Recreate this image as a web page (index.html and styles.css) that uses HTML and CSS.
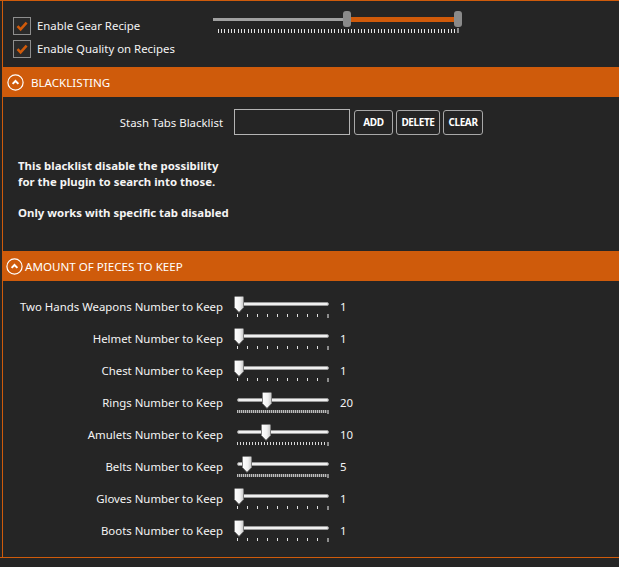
FILE: index.html
```html
<!DOCTYPE html>
<html>
<head>
<meta charset="utf-8">
<link rel="stylesheet" href="styles.css">
</head>
<body>
<svg class="defs" width="0" height="0" aria-hidden="true">
  <defs>
    <linearGradient id="tg" x1="0" y1="0" x2="1" y2="0">
      <stop offset="0" stop-color="#ffffff"/>
      <stop offset="0.6" stop-color="#f2f2f2"/>
      <stop offset="1" stop-color="#c8c8c8"/>
    </linearGradient>
  </defs>
</svg>
<div class="frame">
  <div class="panel">
    <section class="top">
      <div class="checks">
        <div class="check">
          <span class="box"><svg width="16" height="16" viewBox="0 0 16 16"><path d="M3.5 8.2 L6.6 11.3 L12.6 4.6" fill="none" stroke="#d05a0a" stroke-width="2.6"/></svg></span>
          <span>Enable Gear Recipe</span>
        </div>
        <div class="check">
          <span class="box"><svg width="16" height="16" viewBox="0 0 16 16"><path d="M3.5 8.2 L6.6 11.3 L12.6 4.6" fill="none" stroke="#d05a0a" stroke-width="2.6"/></svg></span>
          <span>Enable Quality on Recipes</span>
        </div>
      </div>
      <div class="range">
        <div class="range-track"></div>
        <div class="range-sel"></div>
        <div class="range-thumb range-thumb-a"></div>
        <div class="range-thumb range-thumb-b"></div>
        <div class="range-ticks"></div>
        <div class="range-end"></div>
      </div>
    </section>

    <div class="hdr">
      <svg class="chev" width="17" height="17" viewBox="0 0 17 17"><circle cx="8.5" cy="8.5" r="7.6" fill="none" stroke="#fff" stroke-width="1.2"/><path d="M5.6 9.9 L8.5 7 L11.4 9.9" fill="none" stroke="#fff" stroke-width="2"/></svg>
      <span>Blacklisting</span>
    </div>

    <section class="blacklist">
      <div class="stash">
        <span class="stash-label">Stash Tabs Blacklist</span>
        <input class="stash-input" type="text">
        <button class="btn btn-add">ADD</button>
        <button class="btn btn-del">DELETE</button>
        <button class="btn btn-clr">CLEAR</button>
      </div>
      <p class="note">This blacklist disable the possibility<br>for the plugin to search into those.</p>
      <p class="note note-2">Only works with specific tab disabled</p>
    </section>

    <div class="hdr hdr-2">
      <svg class="chev" width="17" height="17" viewBox="0 0 17 17"><circle cx="8.5" cy="8.5" r="7.6" fill="none" stroke="#fff" stroke-width="1.2"/><path d="M5.6 9.9 L8.5 7 L11.4 9.9" fill="none" stroke="#fff" stroke-width="2"/></svg>
      <span>Amount of pieces to keep</span>
    </div>

    <section class="keep">
      <div class="row">
        <span class="lbl">Two Hands Weapons Number to Keep</span>
        <div class="slider"><div class="track"></div><div class="ticks t10"></div><div class="tick-end"></div>
          <svg class="thumb" style="left:0px" width="10" height="17" viewBox="0 0 10 17"><path d="M1.5 0.5 H8.5 Q9.5 0.5 9.5 1.5 V11.5 L5 16.3 L0.5 11.5 V1.5 Q0.5 0.5 1.5 0.5 Z" fill="url(#tg)" stroke="#7c7c7c"/></svg></div>
        <span class="val">1</span>
      </div>
      <div class="row">
        <span class="lbl">Helmet Number to Keep</span>
        <div class="slider"><div class="track"></div><div class="ticks t10"></div><div class="tick-end"></div>
          <svg class="thumb" style="left:0px" width="10" height="17" viewBox="0 0 10 17"><path d="M1.5 0.5 H8.5 Q9.5 0.5 9.5 1.5 V11.5 L5 16.3 L0.5 11.5 V1.5 Q0.5 0.5 1.5 0.5 Z" fill="url(#tg)" stroke="#7c7c7c"/></svg></div>
        <span class="val">1</span>
      </div>
      <div class="row">
        <span class="lbl">Chest Number to Keep</span>
        <div class="slider"><div class="track"></div><div class="ticks t10"></div><div class="tick-end"></div>
          <svg class="thumb" style="left:0px" width="10" height="17" viewBox="0 0 10 17"><path d="M1.5 0.5 H8.5 Q9.5 0.5 9.5 1.5 V11.5 L5 16.3 L0.5 11.5 V1.5 Q0.5 0.5 1.5 0.5 Z" fill="url(#tg)" stroke="#7c7c7c"/></svg></div>
        <span class="val">1</span>
      </div>
      <div class="row">
        <span class="lbl">Rings Number to Keep</span>
        <div class="slider"><div class="track"></div><div class="ticks t2"></div><div class="tick-end"></div>
          <svg class="thumb" style="left:28px" width="10" height="17" viewBox="0 0 10 17"><path d="M1.5 0.5 H8.5 Q9.5 0.5 9.5 1.5 V11.5 L5 16.3 L0.5 11.5 V1.5 Q0.5 0.5 1.5 0.5 Z" fill="url(#tg)" stroke="#7c7c7c"/></svg></div>
        <span class="val">20</span>
      </div>
      <div class="row">
        <span class="lbl">Amulets Number to Keep</span>
        <div class="slider"><div class="track"></div><div class="ticks t3"></div><div class="tick-end"></div>
          <svg class="thumb" style="left:27px" width="10" height="17" viewBox="0 0 10 17"><path d="M1.5 0.5 H8.5 Q9.5 0.5 9.5 1.5 V11.5 L5 16.3 L0.5 11.5 V1.5 Q0.5 0.5 1.5 0.5 Z" fill="url(#tg)" stroke="#7c7c7c"/></svg></div>
        <span class="val">10</span>
      </div>
      <div class="row">
        <span class="lbl">Belts Number to Keep</span>
        <div class="slider"><div class="track"></div><div class="ticks t2"></div><div class="tick-end"></div>
          <svg class="thumb" style="left:8px" width="10" height="17" viewBox="0 0 10 17"><path d="M1.5 0.5 H8.5 Q9.5 0.5 9.5 1.5 V11.5 L5 16.3 L0.5 11.5 V1.5 Q0.5 0.5 1.5 0.5 Z" fill="url(#tg)" stroke="#7c7c7c"/></svg></div>
        <span class="val">5</span>
      </div>
      <div class="row">
        <span class="lbl">Gloves Number to Keep</span>
        <div class="slider"><div class="track"></div><div class="ticks t10"></div><div class="tick-end"></div>
          <svg class="thumb" style="left:0px" width="10" height="17" viewBox="0 0 10 17"><path d="M1.5 0.5 H8.5 Q9.5 0.5 9.5 1.5 V11.5 L5 16.3 L0.5 11.5 V1.5 Q0.5 0.5 1.5 0.5 Z" fill="url(#tg)" stroke="#7c7c7c"/></svg></div>
        <span class="val">1</span>
      </div>
      <div class="row">
        <span class="lbl">Boots Number to Keep</span>
        <div class="slider"><div class="track"></div><div class="ticks t10"></div><div class="tick-end"></div>
          <svg class="thumb" style="left:0px" width="10" height="17" viewBox="0 0 10 17"><path d="M1.5 0.5 H8.5 Q9.5 0.5 9.5 1.5 V11.5 L5 16.3 L0.5 11.5 V1.5 Q0.5 0.5 1.5 0.5 Z" fill="url(#tg)" stroke="#7c7c7c"/></svg></div>
        <span class="val">1</span>
      </div>
    </section>
  </div>
</div>
</body>
</html>
```

FILE: styles.css
```css
html, body {
  margin: 0;
  padding: 0;
  background: #252525;
}
body {
  font-family: "Noto Sans", "Open Sans", sans-serif;
  font-size: 11.4px;
  color: #f4f4f4;
  width: 619px;
  height: 567px;
  overflow: hidden;
}
.defs { position: absolute; }
.frame {
  border-top: 1px solid #cf5b0b;
  border-bottom: 1px solid #cf5b0b;
  height: 556px;
}
.panel {
  margin-left: 2px;
  border-left: 1px solid #cf5b0b;
  height: 100%;
}

/* top */
.top {
  height: 66px;
  box-sizing: border-box;
  display: flex;
  padding: 10px 0 0 10px;
}
.checks {
  width: 200px;
  margin-top: 3px;
}
.check {
  display: flex;
  align-items: center;
  height: 23px;
  gap: 6px;
}
.box {
  width: 18px;
  height: 18px;
  box-sizing: border-box;
  border: 1px solid #8e8e8e;
  background: #2a2a2a;
  display: flex;
  align-items: center;
  justify-content: center;
}
.range {
  position: relative;
  width: 250px;
  height: 24px;
}
.range-track {
  position: absolute;
  left: 0; top: 7px;
  width: 132px; height: 3px;
  background: #a0a0a0;
}
.range-sel {
  position: absolute;
  left: 138px; top: 6px;
  width: 103px; height: 5px;
  background: #d05a0a;
}
.range-thumb {
  position: absolute;
  top: 0;
  width: 8px; height: 16px;
  border-radius: 3px;
  background: #8a8a8a;
}
.range-thumb-a { left: 130px; }
.range-thumb-b { left: 241px; }
.range-ticks {
  position: absolute;
  left: 5px; top: 18px;
  width: 239px; height: 4px;
  background: repeating-linear-gradient(90deg, #e6e6e6 0 1px, transparent 1px 3px, #e6e6e6 3px 4px, transparent 4px 6px, #e6e6e6 6px 7px, transparent 7px 10px);
}
.range-end {
  position: absolute;
  left: 244px; top: 17px;
  width: 2px; height: 5px;
  background: #8c8c8c;
}

/* headers */
.hdr {
  height: 30px;
  background: #cf5b0b;
  display: flex;
  align-items: center;
  padding-left: 4px;
  gap: 7px;
  color: #fff;
  font-size: 11.6px;
  text-transform: uppercase;
}
.hdr-2 {
  padding-left: 3px;
  gap: 2px;
}
.chev { flex: none; }

/* blacklist */
.blacklist {
  height: 154px;
  box-sizing: border-box;
  padding-top: 12px;
}
.stash {
  display: flex;
  align-items: center;
  height: 26px;
}
.stash-label {
  width: 220px;
  text-align: right;
}
.stash-input {
  margin: 0 0 0 11px;
  width: 116px;
  height: 26px;
  box-sizing: border-box;
  border: 1px solid #b4b4b4;
  background: #252525;
  padding: 0;
}
.btn {
  height: 25px;
  box-sizing: border-box;
  border: 1px solid #a8a8a8;
  border-radius: 3px;
  background: #252525;
  color: #fff;
  font-family: "Noto Sans", sans-serif;
  font-weight: bold;
  font-size: 10px;
  letter-spacing: -0.4px;
  padding: 0;
  margin: 0 0 0 3px;
}
.btn-add { width: 39px; margin-left: 4px; }
.btn-del { width: 44px; }
.btn-clr { width: 40px; }
.note {
  margin: 23px 0 0 0;
  padding-left: 15px;
  font-weight: bold;
  line-height: 16px;
}
.note-2 { margin-top: 15px; }

/* keep */
.keep {
  padding-top: 9px;
}
.row {
  display: flex;
  align-items: center;
  height: 32px;
}
.lbl {
  width: 220px;
  text-align: right;
}
.slider {
  position: relative;
  width: 95px;
  height: 32px;
  margin-left: 11px;
}
.track {
  position: absolute;
  left: 3px; top: 12px;
  width: 92px; height: 4px;
  box-sizing: border-box;
  border: 1px solid #9a9a9a;
  border-radius: 2px;
  background: #f0f0f0;
}
.ticks {
  position: absolute;
  left: 3px; top: 24px;
  width: 90px; height: 3px;
}
.t10 { background: repeating-linear-gradient(90deg, #e0e0e0 0 1px, transparent 1px 10px); }
.t3 { background: repeating-linear-gradient(90deg, #d8d8d8 0 1px, transparent 1px 3px); }
.t2 {
  background: repeating-linear-gradient(90deg, #bdbdbd 0 1px, #5a5a5a 1px 2px);
  height: 3px;
}
.tick-end {
  position: absolute;
  left: 93px; top: 24px;
  width: 2px; height: 4px;
  background: #8c8c8c;
}
.thumb {
  position: absolute;
  top: 6px;
}
.val {
  margin-left: 11px;
}
```
